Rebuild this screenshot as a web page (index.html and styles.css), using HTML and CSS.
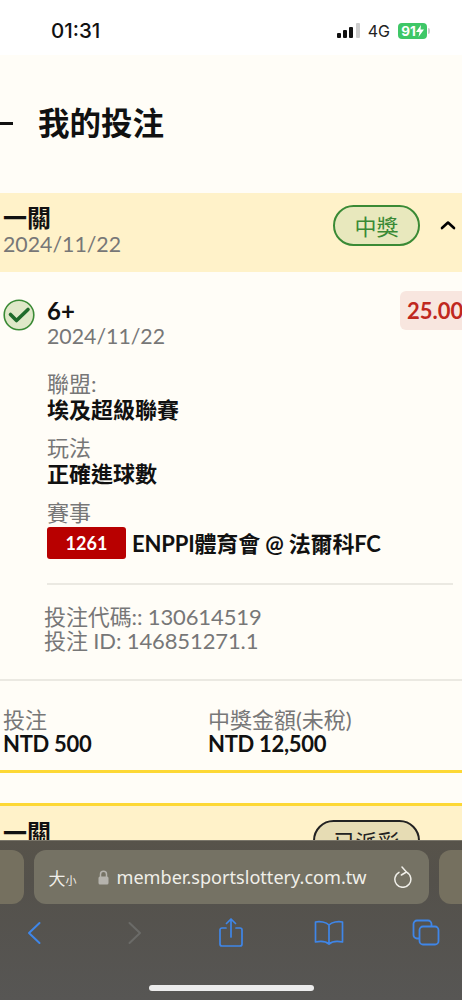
FILE: index.html
```html
<!DOCTYPE html>
<html lang="zh-Hant">
<head>
<meta charset="utf-8">
<title>我的投注</title>
<link rel="stylesheet" href="styles.css">
</head>
<body>
<div class="screen">
  <header class="status">
    <span class="time">01:31</span>
    <div class="status-right">
      <svg class="signal" width="23" height="15" viewBox="0 0 23 15"><rect x="0" y="10" width="4" height="5" rx="1" fill="#111"/><rect x="6" y="7" width="4" height="8" rx="1" fill="#111"/><rect x="12" y="4" width="4" height="11" rx="1" fill="#111"/><rect x="19" y="0" width="4" height="15" rx="1" fill="#ccc"/></svg>
      <span class="net">4G</span>
      <div class="battery"><span class="batt-body">91<svg width="8" height="12" viewBox="0 0 8 12"><path d="M5 0 L0 7 H3.5 L2.5 12 L8 4.5 H4.5 Z" fill="#fff"/></svg></span><span class="batt-tip"></span></div>
    </div>
  </header>

  <main class="page">
    <div class="title-row">
      <span class="dash"></span>
      <h1>我的投注</h1>
    </div>

    <section class="ticket">
      <div class="band">
        <div class="band-text">
          <div class="band-title">一關</div>
          <div class="muted date">2024/11/22</div>
        </div>
        <span class="pill pill-win">中獎</span>
        <svg class="chev" width="16" height="10" viewBox="0 0 16 10"><path d="M2 8 L8 2.5 L14 8" fill="none" stroke="#000" stroke-width="2.6" stroke-linecap="round" stroke-linejoin="round"/></svg>
      </div>

      <div class="detail">
        <div class="leg">
          <svg class="check" width="32" height="32" viewBox="0 0 32 32"><circle cx="16" cy="16" r="14.8" fill="#dfe8c8" stroke="#3a8a35" stroke-width="1.6"/><path d="M7.5 15.5 L13.5 21.5 L25 10.5" fill="none" stroke="#1f6b2b" stroke-width="3.6" stroke-linecap="round" stroke-linejoin="round"/></svg>
          <div class="leg-main">
            <div class="pick">6+</div>
            <div class="muted date">2024/11/22</div>
            <div class="field first">
              <div class="muted">聯盟:</div>
              <div class="strong">埃及超級聯賽</div>
            </div>
            <div class="field">
              <div class="muted">玩法</div>
              <div class="strong">正確進球數</div>
            </div>
            <div class="field last">
              <div class="muted">賽事</div>
              <div class="match"><span class="code">1261</span><span class="strong teams">ENPPI體育會 @ 法爾科FC</span></div>
            </div>
          </div>
          <span class="odds">25.00</span>
        </div>
        <hr class="rule">
        <div class="ids muted">
          <div>投注代碼:: 130614519</div>
          <div>投注 ID: 146851271.1</div>
        </div>
      </div>

      <div class="totals">
        <div class="total">
          <div class="muted">投注</div>
          <div class="amount">NTD 500</div>
        </div>
        <div class="total">
          <div class="muted">中獎金額(未稅)</div>
          <div class="amount">NTD 12,500</div>
        </div>
      </div>
    </section>

    <section class="ticket second">
      <div class="band">
        <div class="band-text">
          <div class="band-title">一關</div>
        </div>
        <span class="pill pill-paid">已派彩</span>
        <svg class="chev" width="16" height="10" viewBox="0 0 16 10"><path d="M2 2 L8 8 L14 2" fill="none" stroke="#000" stroke-width="2.6" stroke-linecap="round" stroke-linejoin="round"/></svg>
      </div>
    </section>
  </main>

  <nav class="safari">
    <div class="tabs">
      <div class="tab-peek left"></div>
      <div class="url">
        <span class="aa"><span class="aa-big">大</span><span class="aa-small">小</span></span>
        <svg class="lock" width="11" height="15" viewBox="0 0 11 15"><path d="M2.5 7 V4.2 a3 3 0 0 1 6 0 V7" fill="none" stroke="#b5b3ad" stroke-width="1.5"/><rect x="0.5" y="6.5" width="10" height="8" rx="1.5" fill="#b5b3ad"/></svg>
        <span class="host">member.sportslottery.com.tw</span>
        <svg class="reload" width="20" height="22" viewBox="0 0 20 22"><path d="M13.5 4.2 A8 8 0 1 1 6 4.3" fill="none" stroke="#f0efe9" stroke-width="1.5" stroke-linecap="round" transform="translate(0 2)"/><path d="M9 1 L13.4 6 L8.4 9" fill="none" stroke="#f0efe9" stroke-width="1.5" stroke-linecap="round" stroke-linejoin="round"/></svg>
      </div>
      <div class="tab-peek right"></div>
    </div>
    <div class="tools">
      <svg width="14" height="24" viewBox="0 0 14 24"><path d="M12.5 2 L2 12 L12.5 22" fill="none" stroke="#3f86e8" stroke-width="2" stroke-linecap="round" stroke-linejoin="round"/></svg>
      <svg width="14" height="24" viewBox="0 0 14 24"><path d="M1.5 2 L12 12 L1.5 22" fill="none" stroke="#6b6b68" stroke-width="2" stroke-linecap="round" stroke-linejoin="round"/></svg>
      <svg width="24" height="29" viewBox="0 0 24 29"><path d="M7 10 H3 a2 2 0 0 0 -2 2 V26 a2 2 0 0 0 2 2 H21 a2 2 0 0 0 2 -2 V12 a2 2 0 0 0 -2 -2 H17 M12 19 V1.5 M7.5 5.5 L12 1 L16.5 5.5" fill="none" stroke="#3f86e8" stroke-width="1.7" stroke-linecap="round" stroke-linejoin="round"/></svg>
      <svg width="30" height="25" viewBox="0 0 30 25"><path d="M15 5 C12 2 6 1 1.5 2 V22 C6 21 12 21.5 15 24 C18 21.5 24 21 28.5 22 V2 C24 1 18 2 15 5 Z M15 5 V24" fill="none" stroke="#3f86e8" stroke-width="1.7" stroke-linejoin="round"/></svg>
      <svg width="28" height="27" viewBox="0 0 28 27"><rect x="7.5" y="7.5" width="19" height="18" rx="3.5" fill="none" stroke="#3f86e8" stroke-width="1.8"/><path d="M7.5 19.5 H5 a3.5 3.5 0 0 1 -3.5 -3.5 V5 a3.5 3.5 0 0 1 3.5 -3.5 H16 a3.5 3.5 0 0 1 3.5 3.5 V7.5" fill="none" stroke="#3f86e8" stroke-width="1.8"/></svg>
    </div>
    <div class="home"></div>
  </nav>
</div>
</body>
</html>
```

FILE: styles.css
```css
* { box-sizing: border-box; }
html, body { margin: 0; padding: 0; }
body {
  font-family: Lato, "Noto Sans CJK TC", sans-serif;
  background: #fff;
  color: #111;
}
.screen {
  position: relative;
  width: 462px;
  height: 1000px;
  overflow: hidden;
  background: #fff;
}
.status {
  height: 55px;
  display: flex;
  align-items: center;
  justify-content: space-between;
  padding: 6px 33px 0 51px;
  background: #fff;
}
.time {
  font-family: Inter, "Liberation Sans", sans-serif;
  font-size: 20.5px;
  font-weight: 500;
  color: #111;
}
.status-right { display: flex; align-items: center; gap: 8px; margin-right: -1px; }
.net { font-family: Inter, "Liberation Sans", sans-serif; font-size: 16px; color: #222; }
.battery { display: flex; align-items: center; }
.batt-body {
  display: flex;
  align-items: center;
  justify-content: center;
  gap: 0;
  width: 29px;
  height: 16px;
  border-radius: 4px;
  background: #3fc767;
  color: #fff;
  font-family: Inter, "Liberation Sans", sans-serif;
  font-size: 13.5px;
  font-weight: 700;
}
.batt-tip { width: 2px; height: 6px; background: #ccc; border-radius: 0 2px 2px 0; margin-left: 1px; }

.page { height: 945px; background: #fffdf7; }
.title-row { height: 138px; display: flex; align-items: center; gap: 25px; padding-bottom: 2px; }
.dash { width: 13px; height: 3px; background: #111; }
h1 {
  margin: 0;
  font-size: 31.5px;
  line-height: 40px;
  font-weight: 700;
  color: #111;
}

.band {
  display: flex;
  align-items: center;
  height: 79px;
  padding: 0 6px 0 3px;
  background: #fff2c9;
}
.band-text { flex: 1; margin-top: -4px; }
.band-title { font-size: 24px; line-height: 27px; font-weight: 700; color: #111; }
.muted { font-size: 22px; line-height: 25px; color: #777; }
.date { font-size: 21.3px; }
.band .muted { line-height: 26px; }
.pill {
  display: flex;
  align-items: center;
  justify-content: center;
  height: 41px;
  padding-bottom: 2px;
  border-radius: 21px;
  font-size: 22px;
}
.pill-win { width: 87px; margin: 0 20px 14px 0; background: #e8e8bd; border: 2px solid #3a8a35; color: #3a8a35; }
.chev { flex: none; margin-bottom: 15px; }

.detail { padding: 19px 0 0 3px; }
.leg { display: flex; align-items: flex-start; }
.check { flex: none; margin-top: 8px; }
.leg-main { flex: 1; margin-left: 12px; }
.pick { font-size: 24px; line-height: 26px; font-weight: 700; color: #111; margin-top: 7px; }
.strong { font-size: 22px; line-height: 27px; font-weight: 700; color: #111; }
.teams { letter-spacing: -0.17px; }
.field { margin-top: 12px; }
.field.first { margin-top: 22px; }
.field.last { margin-top: 13px; }
.match { display: flex; align-items: center; gap: 6px; margin-top: 2px; }
.code {
  width: 79px;
  height: 32px;
  display: flex;
  align-items: center;
  justify-content: center;
  border-radius: 3px;
  background: #b80000;
  color: #fff;
  font-size: 18px;
  font-weight: 700;
}
.odds {
  flex: none;
  width: 62px;
  height: 39px;
  padding-left: 7px;
  display: flex;
  align-items: center;
  border-radius: 6px 0 0 6px;
  background: #f8e6df;
  color: #c0281e;
  font-size: 22px;
  font-weight: 700;
}
.rule { margin: 24px 9px 0 44px; border: 0; border-top: 2px solid #ebe9e2; }
.ids { margin: 20px 0 0 41px; letter-spacing: -0.12px; }
.ids div { line-height: 24px; }

.totals {
  display: flex;
  margin-top: 26px;
  height: 94px;
  padding: 27px 0 0 3px;
  border-top: 2px solid #ebe9e2;
  border-bottom: 3px solid #fdd835;
}
.total { width: 205px; }
.total .muted { line-height: 24px; }
.amount { font-size: 22px; line-height: 24px; font-weight: 700; color: #111; letter-spacing: -0.3px; }

.second { margin-top: 30px; }
.second .band { border-top: 3px solid #fdd835; align-items: flex-start; padding-top: 13px; }
.second .band-text { margin-top: 0; }
.second .chev { margin: 24px 0 0; }
.pill-paid { width: 107px; margin: 1px 20px 0 0; background: #e6dcb4; border: 2px solid #222; color: #222; }

.safari {
  position: absolute;
  left: 0;
  right: 0;
  bottom: 0;
  height: 160px;
  background: linear-gradient(#57534a 0, #54514b 40px, #575654 100%);
  border-top: 1px solid #7a766a;
}
.tabs { display: flex; gap: 10px; margin: 9px -14px 0; justify-content: center; }
.tab-peek { flex: none; width: 37px; height: 54px; background: #75705f; }
.tab-peek.left { border-radius: 0 12px 12px 0; }
.tab-peek.right { border-radius: 12px 0 0 12px; }
.url {
  flex: none;
  width: 395px;
  height: 54px;
  display: flex;
  align-items: center;
  padding: 0 16px 0 15px;
  border-radius: 12px;
  background: #757264;
  color: #f0efe9;
}
.aa { display: flex; align-items: baseline; width: 49px; }
.aa-big { font-size: 17px; }
.aa-small { font-size: 11px; }
.lock { flex: none; margin-right: 8px; }
.host { flex: 1; white-space: nowrap; font-family: "Noto Sans", sans-serif; font-size: 18.1px; }
.reload { flex: none; }
.tools {
  display: grid;
  grid-template-columns: 68px 134px 58px 138px 56px;
  justify-items: center;
  align-items: center;
  margin-top: 14px;
}
.home {
  position: absolute;
  left: 149px;
  bottom: 9px;
  width: 165px;
  height: 6px;
  border-radius: 3px;
  background: #ececec;
}
```
